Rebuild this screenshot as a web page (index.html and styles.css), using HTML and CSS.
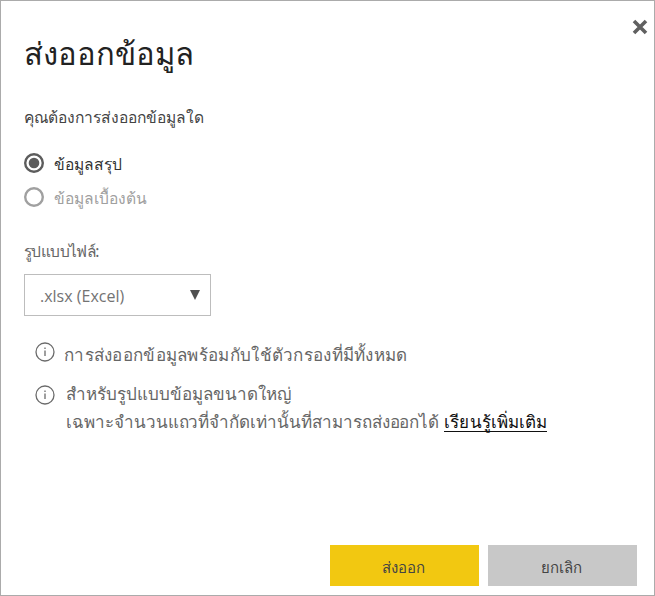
FILE: index.html
```html
<!DOCTYPE html>
<html lang="th">
<head>
<meta charset="utf-8">
<title>ส่งออกข้อมูล</title>
<link rel="stylesheet" href="styles.css">
</head>
<body>
<main class="dialog">
  <header class="header">
    <h1 class="title">ส่งออกข้อมูล</h1>
    <svg class="close" viewBox="0 0 16 16"><path d="M2 2 14 14M14 2 2 14"/></svg>
  </header>
  <p class="question">คุณต้องการส่งออกข้อมูลใด</p>
  <div class="options">
    <div class="option">
      <svg class="radio" viewBox="0 0 20 20"><circle class="ring" cx="10" cy="10" r="8.8"/><circle class="dot" cx="10" cy="10" r="5.3"/></svg>
      <span>ข้อมูลสรุป</span>
    </div>
    <div class="option disabled">
      <svg class="radio" viewBox="0 0 20 20"><circle class="ring" cx="10" cy="10" r="8.8"/></svg>
      <span>ข้อมูลเบื้องต้น</span>
    </div>
  </div>
  <div class="format-label">รูปแบบไฟล์:</div>
  <div class="select">
    <span>.xlsx (Excel)</span>
    <svg class="arrow" viewBox="0 0 10 10"><path d="M0 0H10L5 10Z"/></svg>
  </div>
  <section class="notes">
    <div class="note">
      <svg class="info" viewBox="0 0 20 20"><circle cx="10" cy="10" r="9"/><path d="M10 8.5V14M10 5.5V7"/></svg>
      <p class="filters">การส่งออกข้อมูลพร้อมกับใช้ตัวกรองที่มีทั้งหมด</p>
    </div>
    <div class="note large">
      <svg class="info" viewBox="0 0 20 20"><circle cx="10" cy="10" r="9"/><path d="M10 8.5V14M10 5.5V7"/></svg>
      <div class="lines">
        <p>สำหรับรูปแบบข้อมูลขนาดใหญ่</p>
        <p class="limit"><span>เฉพาะจำนวนแถวที่จำกัดเท่านั้นที่สามารถส่งออกได้</span><a class="link">เรียนรู้เพิ่มเติม</a></p>
      </div>
    </div>
  </section>
  <footer class="footer">
    <button class="button primary">ส่งออก</button>
    <button class="button">ยกเลิก</button>
  </footer>
</main>
</body>
</html>
```
FILE: styles.css
```css
* { box-sizing: border-box; }
body { margin: 0; background: #fff; font-family: "Noto Sans", "Open Sans", sans-serif; }
h1, p { margin: 0; font-weight: 400; }
svg { display: block; flex: none; }
.dialog {
  width: 655px; height: 596px; border: 1px solid #ababab;
  padding: 18px 17px 9px 23px; display: flex; flex-direction: column;
  font-size: 16px; line-height: 28px; white-space: nowrap; color: #666;
}
.header { display: flex; justify-content: space-between; height: 68px; margin-right: -11px; }
.title { font-size: 31px; line-height: 68px; color: #222; }
.close { width: 16px; height: 16px; }
.close path { fill: none; stroke: #606060; stroke-width: 3.6; }
.question { margin-top: 16px; font-size: 15.6px; color: #444; }
.options { margin-top: 17px; display: grid; gap: 6px; }
.option { display: flex; align-items: center; gap: 10px; height: 28px; color: #333; font-size: 15.6px; }
.option span { padding-top: 3px; }
.radio { width: 20px; height: 20px; margin-top: 2px; }
.ring { fill: none; stroke: #5c5c5c; stroke-width: 2.4; }
.dot { fill: #5c5c5c; }
.disabled { color: #a0a0a0; }
.disabled .ring { stroke: #a0a0a0; }
.format-label { margin-top: 27px; font-size: 15.5px; letter-spacing: -0.6px; }
.select {
  margin-top: 9px; width: 187px; height: 42px; padding: 0 10px 0 15px;
  border: 1px solid #bdbdbd; display: flex; align-items: center; justify-content: space-between;
  font-family: "Open Sans", sans-serif; font-size: 16px; color: #737373;
}
.select span { padding-top: 2px; }
.arrow { width: 10px; height: 10px; fill: #505050; }
.notes { margin: 26px 0 0 11px; font-size: 17px; letter-spacing: 0.01px; }
.note { display: flex; gap: 9px; }
.filters { margin-top: -1px; letter-spacing: 0.29px; }
.large { margin-top: 13px; gap: 11px; }
.info { width: 20px; height: 20px; }
.info circle, .info path { fill: none; stroke: #6b6b6b; stroke-width: 1.3; }
.large .info { margin-top: 3px; }
.lines { margin-top: -2px; }
.limit { display: flex; gap: 5px; letter-spacing: -0.05px; }
.link { color: #111; height: 24px; letter-spacing: 0.1px; border-bottom: 1px solid #111; }
.footer { margin-top: auto; display: flex; justify-content: flex-end; gap: 9px; }
.button {
  width: 149px; height: 41px; padding: 2px 2px 0 0; border: 0; background: #c8c8c8;
  font: inherit; font-size: 15px; color: #444;
}
.primary { background: #f2c811; }
```
